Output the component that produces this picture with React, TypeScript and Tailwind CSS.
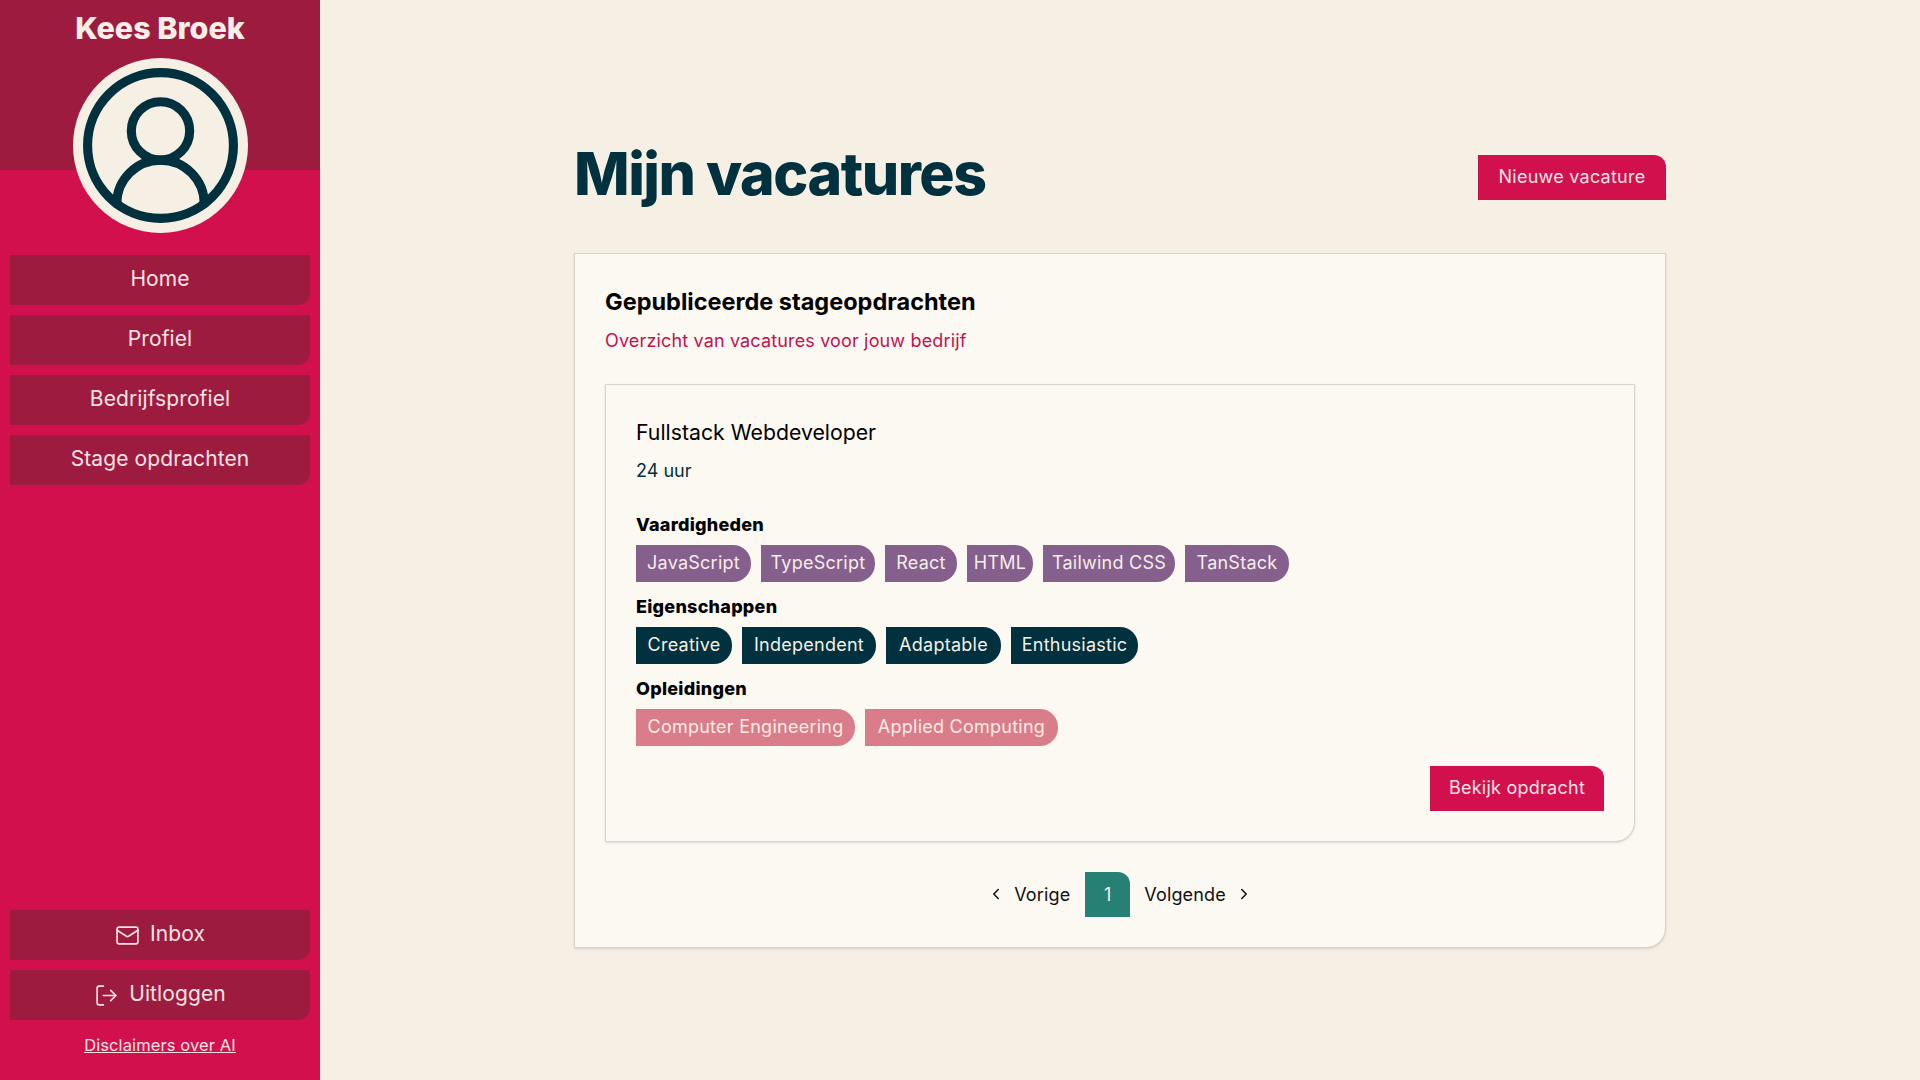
import { ChevronLeft, ChevronRight, CircleUserRound, LogOut, Mail } from "lucide-react";

const body = "font-['Inter','Noto_Sans',sans-serif]";

function NavButton({ children }: { children: React.ReactNode }) {
  return (
    <a className="flex h-[50px] items-center justify-center gap-[10px] rounded-br-xl bg-[#9e1b40] pb-[2px] text-[21px] tracking-[0.1px] text-[#fbe3e3]">
      {children}
    </a>
  );
}

type ChipItem = { label: string; width: string };

function ChipGroup({ title, items, cls }: { title: string; items: ChipItem[]; cls: string }) {
  return (
    <div className="flex flex-col gap-[8px]">
      <h4 className="h-[24px] text-[18px] leading-[24px] font-extrabold tracking-[0.25px] text-black">{title}</h4>
      <div className="flex gap-[10px]">
        {items.map((i) => (
          <span
            key={i.label}
            className={`flex h-[37px] items-center justify-center rounded-r-[18px] pb-[2px] text-[18px] tracking-[0.25px] whitespace-nowrap ${i.width} ${cls}`}
          >
            {i.label}
          </span>
        ))}
      </div>
    </div>
  );
}

export default function App() {
  return (
    <div className={`flex h-screen w-full bg-[#f5efe4] ${body}`}>
      <aside className="relative flex w-[320px] shrink-0 flex-col bg-[#d1104d] px-[10px] pb-[24px]">
        <div className="absolute inset-x-0 top-0 h-[170px] bg-[#9e1b40]" />
        <div className="relative flex flex-col items-center">
          <h2 className="mt-[7px] text-[30.5px] leading-[42px] font-extrabold text-[#fbeee6]">Kees Broek</h2>
          <div className="mt-[9px] flex h-[175px] w-[175px] items-center justify-center rounded-full bg-[#f5efe4]">
            <CircleUserRound size={175} strokeWidth={1.25} className="text-[#01303f]" />
          </div>
        </div>
        <nav className="relative mt-[22px] flex flex-col gap-[10px]">
          <NavButton>Home</NavButton>
          <NavButton>Profiel</NavButton>
          <NavButton>Bedrijfsprofiel</NavButton>
          <NavButton>Stage opdrachten</NavButton>
        </nav>
        <div className="mt-auto flex flex-col gap-[10px]">
          <NavButton>
            <Mail size={25} strokeWidth={1.6} className="mt-[3px]" />
            Inbox
          </NavButton>
          <NavButton>
            <LogOut size={25} strokeWidth={1.6} className="mt-[3px]" />
            Uitloggen
          </NavButton>
          <a className="mt-[4px] text-center text-[16.5px] leading-[22px] tracking-[0.1px] text-[#fbe3e3] underline">Disclaimers over AI</a>
        </div>
      </aside>
      <main className="flex-1 pl-[254px] pr-[254px] pt-[130px]">
        <div className="flex h-[90px] items-center justify-between">
          <h1 className="mt-[-2px] text-[59px] font-extrabold tracking-[-1.5px] text-[#01303f]">Mijn vacatures</h1>
          <a className="flex h-[45px] w-[188px] translate-y-[2px] items-center justify-center rounded-tr-xl bg-[#d1104d] pb-[2px] text-[18px] tracking-[0.25px] text-[#fbe3e3]">
            Nieuwe vacature
          </a>
        </div>
        <section className="mt-[33px] flex h-[695px] flex-col rounded-br-[20px] border border-[#d9d3c7] bg-[#fcf8f2] px-[30px] pt-[31px] shadow-sm">
          <h2 className="text-[23.5px] leading-[34px] font-bold text-black">Gepubliceerde stageopdrachten</h2>
          <p className="mt-[9px] text-[18px] leading-[26px] tracking-[0.15px] text-[#c4114f]">Overzicht van vacatures voor jouw bedrijf</p>
          <article className="mt-[30px] flex h-[458px] flex-col rounded-br-[20px] border border-[#d9d3c7] bg-[#fcf8f2] px-[30px] pt-[30px] shadow-sm">
            <h3 className="text-[21.25px] leading-[34px] text-black">Fullstack Webdeveloper</h3>
            <p className="mt-[9px] text-[18px] leading-[26px] text-[#01303f]">24 uur</p>
            <div className="mt-[29px] flex flex-col gap-[13px]">
              <ChipGroup
                title="Vaardigheden"
                cls="bg-[#85608c] text-[#f7ece9]"
                items={[
                  { label: "JavaScript", width: "w-[115px]" },
                  { label: "TypeScript", width: "w-[114px]" },
                  { label: "React", width: "w-[72px]" },
                  { label: "HTML", width: "w-[66px]" },
                  { label: "Tailwind CSS", width: "w-[132px]" },
                  { label: "TanStack", width: "w-[104px]" },
                ]}
              />
              <ChipGroup
                title="Eigenschappen"
                cls="bg-[#01303f] text-[#f5efe4]"
                items={[
                  { label: "Creative", width: "w-[96px]" },
                  { label: "Independent", width: "w-[134px]" },
                  { label: "Adaptable", width: "w-[115px]" },
                  { label: "Enthusiastic", width: "w-[127px]" },
                ]}
              />
              <ChipGroup
                title="Opleidingen"
                cls="bg-[#d97d8b] text-[#fbeae4]"
                items={[
                  { label: "Computer Engineering", width: "w-[219px]" },
                  { label: "Applied Computing", width: "w-[193px]" },
                ]}
              />
            </div>
            <div className="mt-[20px] flex justify-end">
              <a className="flex h-[45px] w-[174px] items-center justify-center rounded-tr-xl bg-[#d1104d] pb-[3px] text-[18px] tracking-[0.25px] text-[#fbe3e3]">
                Bekijk opdracht
              </a>
            </div>
          </article>
          <nav className="mt-[30px] flex items-center justify-center gap-[4px] text-[18px] tracking-[0.15px] text-[#111]">
            <a className="flex h-[45px] items-center gap-[9px] pb-[1px] pl-[10px] pr-[11px]">
              <ChevronLeft size={18} />
              Vorige
            </a>
            <a className="flex h-[45px] w-[45px] items-center justify-center rounded-tr-xl bg-[#268073] pb-[1px] text-[#f5efe4]">1</a>
            <a className="flex h-[45px] items-center gap-[9px] pb-[1px] px-[10px]">
              Volgende
              <ChevronRight size={18} />
            </a>
          </nav>
        </section>
      </main>
    </div>
  );
}
